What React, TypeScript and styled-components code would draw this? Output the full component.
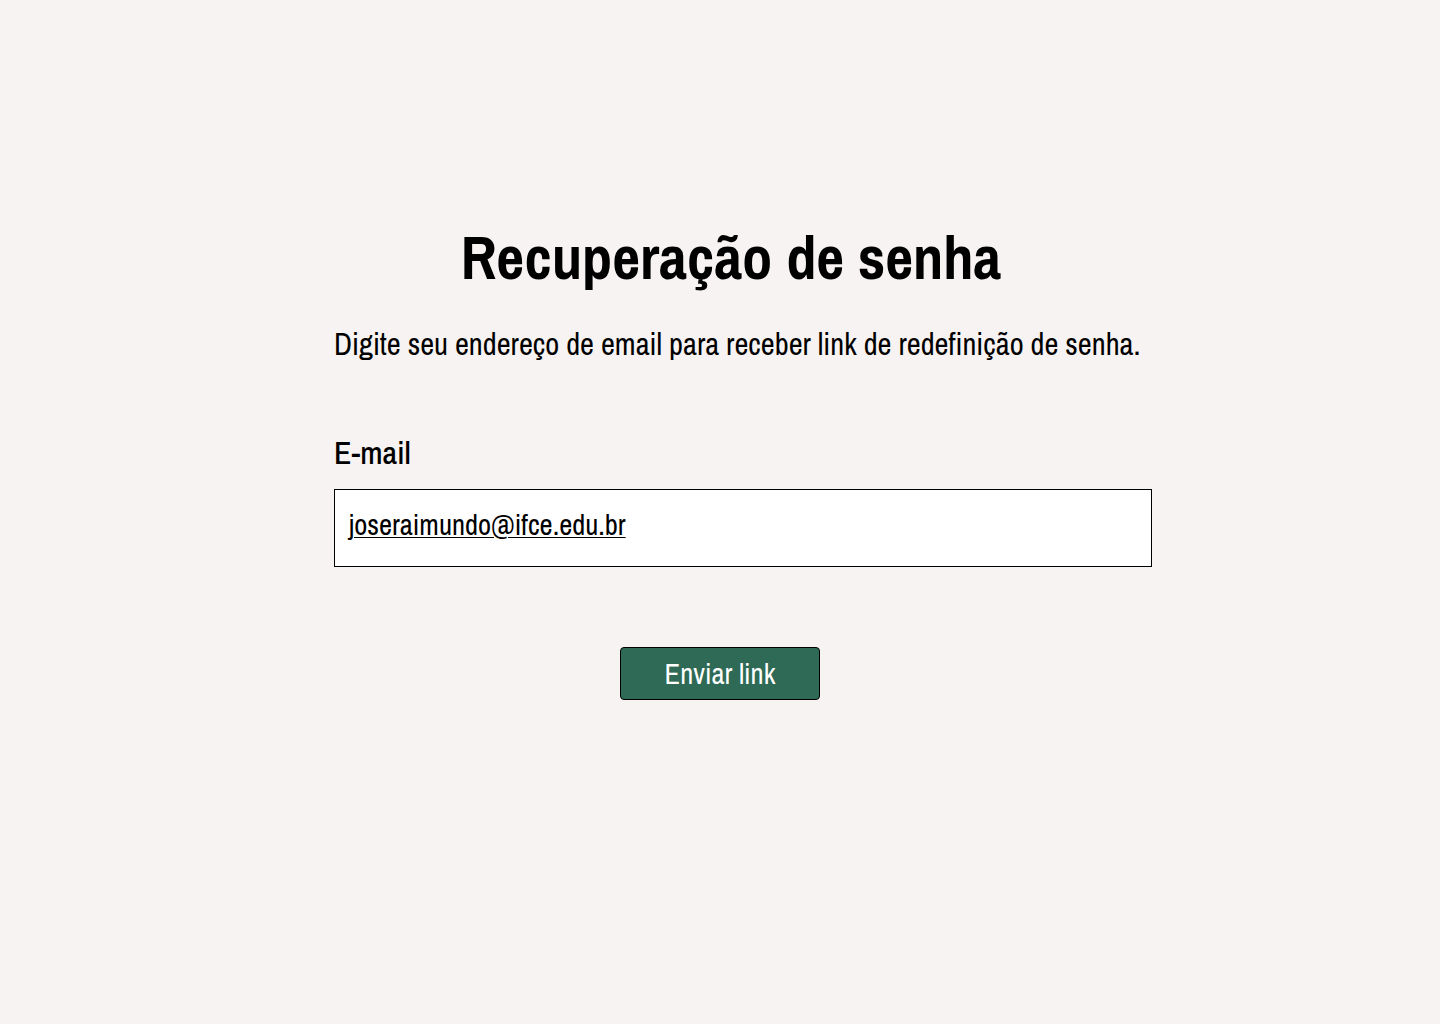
import React from "react";
import styled, { createGlobalStyle } from "styled-components";

const Global = createGlobalStyle`
  html, body { margin: 0; padding: 0; background: #f7f3f2; }
  body { font-family: "Archivo Narrow", "Roboto", sans-serif; color: #000; }
`;

const Page = styled.main`
  min-height: 1024px;
  display: flex;
  justify-content: center;
  padding-top: 222px;
  box-sizing: border-box;
`;

const Form = styled.form`
  width: 818px;
  margin-left: 46px;
  display: flex;
  flex-direction: column;
`;

const Title = styled.h1`
  margin: 0;
  font-size: 60.5px;
  font-weight: 700;
  line-height: 70px;
  text-align: center;
  padding-right: 24px;
`;

const Lead = styled.p`
  margin: 34px 0 0;
  font-size: 30.5px;
  line-height: 36px;
`;

const Label = styled.label`
  margin-top: 72px;
  font-size: 32px;
  font-weight: 500;
  line-height: 38px;
`;

const Input = styled.div`
  margin-top: 17px;
  height: 78px;
  box-sizing: border-box;
  background: #fff;
  border: 1px solid #000;
  padding: 0 14px 8px;
  display: flex;
  align-items: center;
  font-size: 28.6px;
  text-decoration: underline;
  text-decoration-thickness: 1px;
  text-underline-offset: 2px;
`;

const Button = styled.button`
  align-self: flex-start;
  margin: 80px 0 0 286px;
  width: 200px;
  height: 53px;
  background: #2e6a55;
  color: #fff;
  border: 1px solid #000;
  border-radius: 4px;
  font-family: inherit;
  font-size: 28.6px;
  cursor: pointer;
`;

export default function App() {
  return (
    <>
      <Global />
      <Page>
        <Form onSubmit={(e) => e.preventDefault()}>
          <Title>Recuperação de senha</Title>
          <Lead>Digite seu endereço de email para receber link de redefinição de senha.</Lead>
          <Label>E-mail</Label>
          <Input>joseraimundo@ifce.edu.br</Input>
          <Button type="submit">Enviar link</Button>
        </Form>
      </Page>
    </>
  );
}
